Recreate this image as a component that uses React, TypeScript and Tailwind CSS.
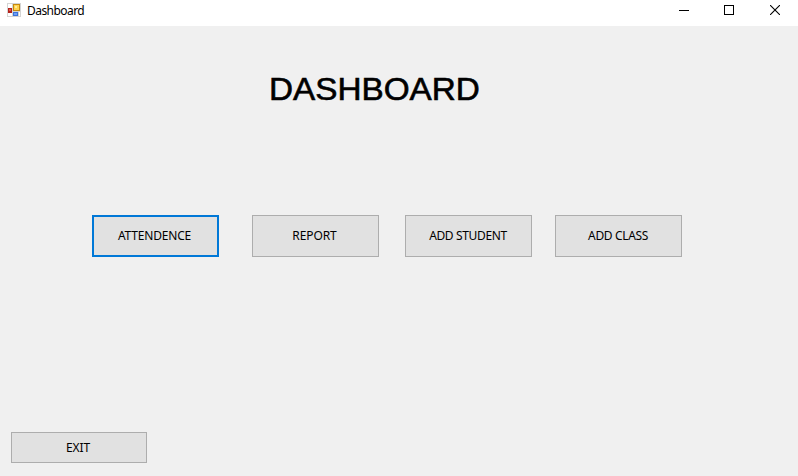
import type { ReactNode } from 'react';

function FormIcon() {
  return (
    <svg width="14" height="14" viewBox="0 0 14 14" shapeRendering="crispEdges">
      <rect width="14" height="14" fill="#d4d4d4" />
      <rect x="1" y="1" width="4" height="4" fill="#fff" />
      <rect x="1" y="10" width="4" height="3" fill="#fff" />
      <rect x="12" y="9" width="1" height="4" fill="#fff" />
      <rect x="1" y="5" width="4" height="5" fill="#b3221b" />
      <rect x="2" y="6" width="2" height="2" fill="#e2574b" />
      <rect x="6" y="1" width="7" height="7" fill="#c58a10" />
      <rect x="7" y="2" width="5" height="5" fill="#ffd34d" />
      <rect x="8" y="3" width="2" height="2" fill="#ffeb9a" />
      <rect x="6" y="9" width="5" height="4" fill="#3b72d9" />
      <rect x="7" y="10" width="3" height="2" fill="#6d9ff5" />
    </svg>
  );
}

function FormButton({ className, label, children }: { className: string; label: string; children?: ReactNode }) {
  return (
    <button
      className={`flex shrink-0 items-center justify-center bg-[#e1e1e1] text-[12px] leading-4 whitespace-nowrap ${className}`}
    >
      <span className={label}>{children}</span>
    </button>
  );
}

export default function App() {
  return (
    <div className="flex h-[476px] w-[798px] flex-col overflow-hidden bg-[#f0f0f0] font-['Noto_Sans',sans-serif] text-black">
      <header className="flex h-[26px] shrink-0 items-start bg-white pl-[7px]">
        <div className="mt-[3px]">
          <FormIcon />
        </div>
        <span className="mt-[3px] ml-[6px] text-[12px] leading-4 tracking-[-0.55px]">Dashboard</span>
        <div className="mt-[5px] mr-[18px] ml-auto flex">
          <svg className="mr-[35px]" width="10" height="10" viewBox="0 0 10 10" shapeRendering="crispEdges">
            <path d="M0 5.5H10" stroke="#000" />
          </svg>
          <svg className="mr-[36px]" width="10" height="10" viewBox="0 0 10 10" shapeRendering="crispEdges">
            <rect x="0.5" y="0.5" width="9" height="9" fill="none" stroke="#000" />
          </svg>
          <svg width="10" height="10" viewBox="0 0 10 10">
            <path d="M0 0L10 10M10 0L0 10" stroke="#000" strokeWidth="1.1" />
          </svg>
        </div>
      </header>
      <h1 className="mt-[44px] ml-[269px] w-fit origin-left scale-x-[1.04] font-['Liberation_Sans',Arial,sans-serif] text-[32px] leading-[38px] [-webkit-text-stroke:0.6px_#000]">
        DASHBOARD
      </h1>
      <main className="mt-[107px] flex pl-[92px]">
        <FormButton className="h-[42px] w-[127px] border-2 border-[#0078d7] pr-[2px]" label="tracking-[-0.2px]">
          ATTENDENCE
        </FormButton>
        <FormButton className="ml-[33px] h-[42px] w-[127px] border border-[#adadad] pr-[2px]" label="tracking-[-0.1px]">
          REPORT
        </FormButton>
        <FormButton className="ml-[26px] h-[42px] w-[127px] border border-[#adadad] pr-[1px]" label="tracking-[-0.35px]">
          ADD STUDENT
        </FormButton>
        <FormButton className="ml-[23px] h-[42px] w-[127px] border border-[#adadad] pr-[1px]" label="tracking-[-0.35px]">
          ADD CLASS
        </FormButton>
      </main>
      <footer className="mt-auto mb-[13px] pl-[11px]">
        <FormButton className="h-[31px] w-[136px] border border-[#adadad] pr-[2px]" label="tracking-[-0.1px]">
          EXIT
        </FormButton>
      </footer>
    </div>
  );
}
